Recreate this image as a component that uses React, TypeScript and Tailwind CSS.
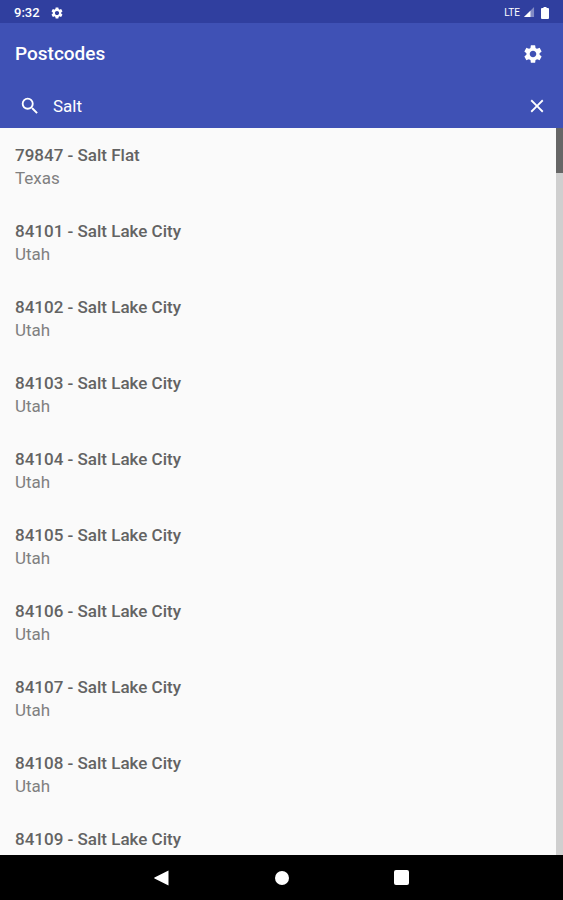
import { useState } from 'react';
import { MdClose, MdSearch, MdSettings } from 'react-icons/md';

// ---------------------------------------------------------------------------
// Data
// ---------------------------------------------------------------------------

interface Postcode {
  code: string;
  place: string;
  state: string;
}

const POSTCODES: Postcode[] = [
  { code: '79847', place: 'Salt Flat', state: 'Texas' },
  { code: '84101', place: 'Salt Lake City', state: 'Utah' },
  { code: '84102', place: 'Salt Lake City', state: 'Utah' },
  { code: '84103', place: 'Salt Lake City', state: 'Utah' },
  { code: '84104', place: 'Salt Lake City', state: 'Utah' },
  { code: '84105', place: 'Salt Lake City', state: 'Utah' },
  { code: '84106', place: 'Salt Lake City', state: 'Utah' },
  { code: '84107', place: 'Salt Lake City', state: 'Utah' },
  { code: '84108', place: 'Salt Lake City', state: 'Utah' },
  { code: '84109', place: 'Salt Lake City', state: 'Utah' },
];

// ---------------------------------------------------------------------------
// System bars
// ---------------------------------------------------------------------------

function StatusBar() {
  return (
    <div className="flex h-[23px] shrink-0 items-center justify-between bg-[#303f9f] px-3.5 pt-0.5 text-white">
      <div className="flex items-center gap-2.5">
        <span className="text-[13px] leading-4 font-medium">9:32</span>
        <MdSettings className="size-3.5" />
      </div>
      <div className="flex items-center">
        <span className="text-[10px] leading-4">LTE</span>
        <svg className="ml-1 size-[11px]" viewBox="0 0 12 12" fill="currentColor">
          <path d="M0 11L11 0v11z" opacity="0.4" />
          <path d="M0 11L7 4v7z" />
        </svg>
        <svg className="ml-1.5 h-3 w-2" viewBox="0 0 8 12" fill="currentColor">
          <path d="M2.5 0h3v1H7q1 0 1 1v9q0 1-1 1H1q-1 0-1-1V2q0-1 1-1h1.5z" />
        </svg>
      </div>
    </div>
  );
}

function NavigationBar() {
  return (
    <nav className="flex h-[45px] shrink-0 justify-center bg-black text-white">
      <button aria-label="Back" className="flex w-[120px] items-center justify-center">
        <svg className="size-4" viewBox="0 0 16 16" fill="currentColor">
          <path d="M14.5 0.5v15L0.5 8.5q-.6-.5 0-1z" />
        </svg>
      </button>
      <button aria-label="Home" className="flex w-[120px] items-center justify-center">
        <span className="size-3.5 rounded-full bg-white" />
      </button>
      <button aria-label="Overview" className="flex w-[120px] items-center justify-center">
        <span className="size-[15px] rounded-xs bg-white" />
      </button>
    </nav>
  );
}

// ---------------------------------------------------------------------------
// Result row
// ---------------------------------------------------------------------------

function PostcodeRow({ item }: { item: Postcode }) {
  return (
    <li className="px-[15px] pt-4 pb-3.5">
      <p className="text-[17px] leading-[23px] font-medium text-[#636363]">
        {item.code} - {item.place}
      </p>
      <p className="text-[17px] leading-[23px] text-[#808080]">{item.state}</p>
    </li>
  );
}

// ---------------------------------------------------------------------------
// Main export
// ---------------------------------------------------------------------------

export default function App() {
  const [query, setQuery] = useState('Salt');

  const results = POSTCODES.filter((p) =>
    `${p.code} ${p.place}`.toLowerCase().includes(query.toLowerCase()),
  );

  return (
    <div className="flex h-screen flex-col overflow-hidden bg-[#fafafa] font-['Roboto',sans-serif]">
      <StatusBar />

      <header className="shrink-0 bg-[#3f51b5] text-white">
        <div className="flex h-[60px] items-center justify-between px-[15px] pt-px pr-[19px]">
          <h1 className="text-[19px] leading-6 font-medium">Postcodes</h1>
          <button aria-label="Settings">
            <MdSettings className="size-[22px]" />
          </button>
        </div>

        <div className="flex h-[45px] items-center pr-[15px] pl-[19px]">
          <MdSearch className="size-[22px] shrink-0" />
          <input
            type="text"
            aria-label="Search postcodes"
            value={query}
            onChange={(e) => setQuery(e.target.value)}
            className="ml-3 min-w-0 flex-1 bg-transparent text-[17px] leading-6 outline-none"
          />
          <button aria-label="Clear search" onClick={() => setQuery('')}>
            <MdClose className="size-[22px]" />
          </button>
        </div>
      </header>

      <main className="flex min-h-0 flex-1">
        <ul className="min-w-0 flex-1 overflow-hidden">
          {results.map((item) => (
            <PostcodeRow key={item.code} item={item} />
          ))}
        </ul>
        {/* Scroll track */}
        <div className="w-[7px] shrink-0 bg-[#cfcfcf]">
          <div className="h-[45px] bg-[#666666]" />
        </div>
      </main>

      <NavigationBar />
    </div>
  );
}
